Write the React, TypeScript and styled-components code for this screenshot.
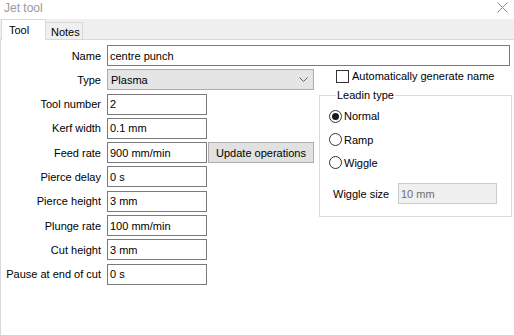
import React from "react";
import styled, { createGlobalStyle } from "styled-components";

const GlobalStyle = createGlobalStyle`
  html, body { margin: 0; padding: 0; background: #ffffff; }
  body {
    font-family: "Liberation Sans", Arial, sans-serif;
    font-size: 11px;
    color: #000000;
  }
  #root { height: 335px; }
`;

const Window = styled.div`
  height: 335px;
  display: flex;
  flex-direction: column;
  background: #ffffff;
  overflow: hidden;
`;

const TitleBar = styled.div`
  height: 19px;
  display: flex;
  align-items: center;
  justify-content: space-between;
  padding: 0 6px 4px 4px;
  box-sizing: border-box;
`;

const Title = styled.span`
  color: #9a9a9a;
  font-size: 12px;
  line-height: 14px;
`;

const TabBar = styled.div`
  height: 21px;
  box-sizing: border-box;
  display: flex;
  align-items: flex-end;
  background: #f0f0f0;
  border-bottom: 1px solid #d9d9d9;
  padding-left: 1px;
`;

const Tab = styled.div<{ $active?: boolean }>`
  box-sizing: border-box;
  height: ${(p) => (p.$active ? "21px" : "17px")};
  margin-bottom: ${(p) => (p.$active ? "-1px" : "0")};
  width: ${(p) => (p.$active ? "45px" : "38px")};
  padding-left: ${(p) => (p.$active ? "7px" : "5px")};
  padding-top: ${(p) => (p.$active ? "3px" : "2px")};
  background: ${(p) => (p.$active ? "#ffffff" : "#f0f0f0")};
  border: 1px solid #d9d9d9;
  border-bottom: none;
  margin-left: ${(p) => (p.$active ? "0" : "-1px")};
  line-height: 14px;
`;

const Pane = styled.div`
  flex: 1;
  border-left: 1px solid #d9d9d9;
  padding-top: 5px;
`;

const Form = styled.div`
  display: grid;
  grid-template-columns: 100px 207px 192px;
  column-gap: 6px;
  row-gap: 3.3px;
  grid-auto-rows: 21px;
`;

const Label = styled.label`
  grid-column: 1;
  display: flex;
  align-items: center;
  justify-content: flex-end;
  white-space: nowrap;
`;

const TextBox = styled.input<{ $wide?: boolean }>`
  box-sizing: border-box;
  height: 21px;
  width: ${(p) => (p.$wide ? "auto" : "100px")};
  margin: 0;
  padding: 0 2px;
  border: 1px solid #7a7a7a;
  background: #ffffff;
  font-family: inherit;
  font-size: 11px;
  color: #000000;
  outline: none;
`;

const NameBox = styled(TextBox)`
  grid-column: 2 / 4;
  margin-right: 2px;
`;

const Field = styled.div`
  grid-column: 2;
  display: flex;
  gap: 1px;
`;

const Combo = styled.div`
  grid-column: 2;
  box-sizing: border-box;
  height: 21px;
  display: flex;
  align-items: center;
  justify-content: space-between;
  padding: 0 5px 0 3px;
  background: #e5e5e5;
  border: 1px solid #adadad;
`;

const Button = styled.button`
  box-sizing: border-box;
  height: 21px;
  width: 106px;
  margin: 0;
  padding: 0;
  background: #e1e1e1;
  border: 1px solid #adadad;
  font-family: inherit;
  font-size: 11px;
  color: #000000;
`;

const RightColumn = styled.div`
  grid-column: 3;
  grid-row: 2 / span 8;
  align-self: start;
  display: flex;
  flex-direction: column;
`;

const CheckRow = styled.div`
  display: flex;
  align-items: center;
  gap: 3px;
  margin-left: 16px;
  height: 14px;
`;

const CheckBox = styled.span`
  box-sizing: border-box;
  width: 13px;
  height: 13px;
  border: 1px solid #333333;
  background: #ffffff;
`;

const GroupBox = styled.fieldset`
  margin: 6px 0 0 -1px;
  padding: 6px 0 12px 9px;
  border: 1px solid #dcdcdc;
  display: flex;
  flex-direction: column;
  gap: 7.3px;
  min-width: 0;
`;

const Legend = styled.legend`
  margin-left: 7px;
  padding: 0 1px;
  line-height: 13px;
`;

const RadioRow = styled.div`
  display: flex;
  align-items: center;
  gap: 2px;
  height: 16px;
`;

const RadioCircle = styled.span<{ $checked?: boolean }>`
  box-sizing: border-box;
  width: 13px;
  height: 13px;
  border-radius: 50%;
  border: 1px solid #333333;
  background: #ffffff;
  display: flex;
  align-items: center;
  justify-content: center;
  &::after {
    content: "";
    width: 7px;
    height: 7px;
    border-radius: 50%;
    background: ${(p) => (p.$checked ? "#1a1a1a" : "transparent")};
  }
`;

const SizeRow = styled.div`
  display: flex;
  align-items: center;
  margin-top: 5px;
  padding-left: 4px;
`;

const SizeLabel = styled.span`
  width: 65px;
`;

const DisabledBox = styled(TextBox)`
  width: 99px;
  background: #f0f0f0;
  border-color: #cccccc;
  color: #6d6d6d;
`;

const rows: [string, string][] = [
  ["Tool number", "2"],
  ["Kerf width", "0.1 mm"],
];

const rows2: [string, string][] = [
  ["Pierce delay", "0 s"],
  ["Pierce height", "3 mm"],
  ["Plunge rate", "100 mm/min"],
  ["Cut height", "3 mm"],
  ["Pause at end of cut", "0 s"],
];

export default function App() {
  return (
    <>
      <GlobalStyle />
      <Window>
        <TitleBar>
          <Title>Jet tool</Title>
          <svg width="11" height="11" viewBox="0 0 11 11">
            <path d="M0.5 0.5 L10.5 10.5 M10.5 0.5 L0.5 10.5" stroke="#8a8a8a" strokeWidth="1" fill="none" />
          </svg>
        </TitleBar>
        <TabBar>
          <Tab $active>Tool</Tab>
          <Tab>Notes</Tab>
        </TabBar>
        <Pane>
          <Form>
            <Label>Name</Label>
            <NameBox $wide readOnly value="centre punch" />

            <Label>Type</Label>
            <Combo>
              <span>Plasma</span>
              <svg width="9" height="5" viewBox="0 0 9 5">
                <path d="M0.5 0.5 L4.5 4.5 L8.5 0.5" stroke="#606060" strokeWidth="1" fill="none" />
              </svg>
            </Combo>

            <RightColumn>
              <CheckRow>
                <CheckBox />
                <span>Automatically generate name</span>
              </CheckRow>
              <GroupBox>
                <Legend>Leadin type</Legend>
                <RadioRow>
                  <RadioCircle $checked />
                  <span>Normal</span>
                </RadioRow>
                <RadioRow>
                  <RadioCircle />
                  <span>Ramp</span>
                </RadioRow>
                <RadioRow>
                  <RadioCircle />
                  <span>Wiggle</span>
                </RadioRow>
                <SizeRow>
                  <SizeLabel>Wiggle size</SizeLabel>
                  <DisabledBox readOnly value="10 mm" />
                </SizeRow>
              </GroupBox>
            </RightColumn>

            {rows.map(([l, v]) => (
              <React.Fragment key={l}>
                <Label>{l}</Label>
                <Field>
                  <TextBox readOnly value={v} />
                </Field>
              </React.Fragment>
            ))}

            <Label>Feed rate</Label>
            <Field>
              <TextBox readOnly value="900 mm/min" />
              <Button>Update operations</Button>
            </Field>

            {rows2.map(([l, v]) => (
              <React.Fragment key={l}>
                <Label>{l}</Label>
                <Field>
                  <TextBox readOnly value={v} />
                </Field>
              </React.Fragment>
            ))}
          </Form>
        </Pane>
      </Window>
    </>
  );
}
